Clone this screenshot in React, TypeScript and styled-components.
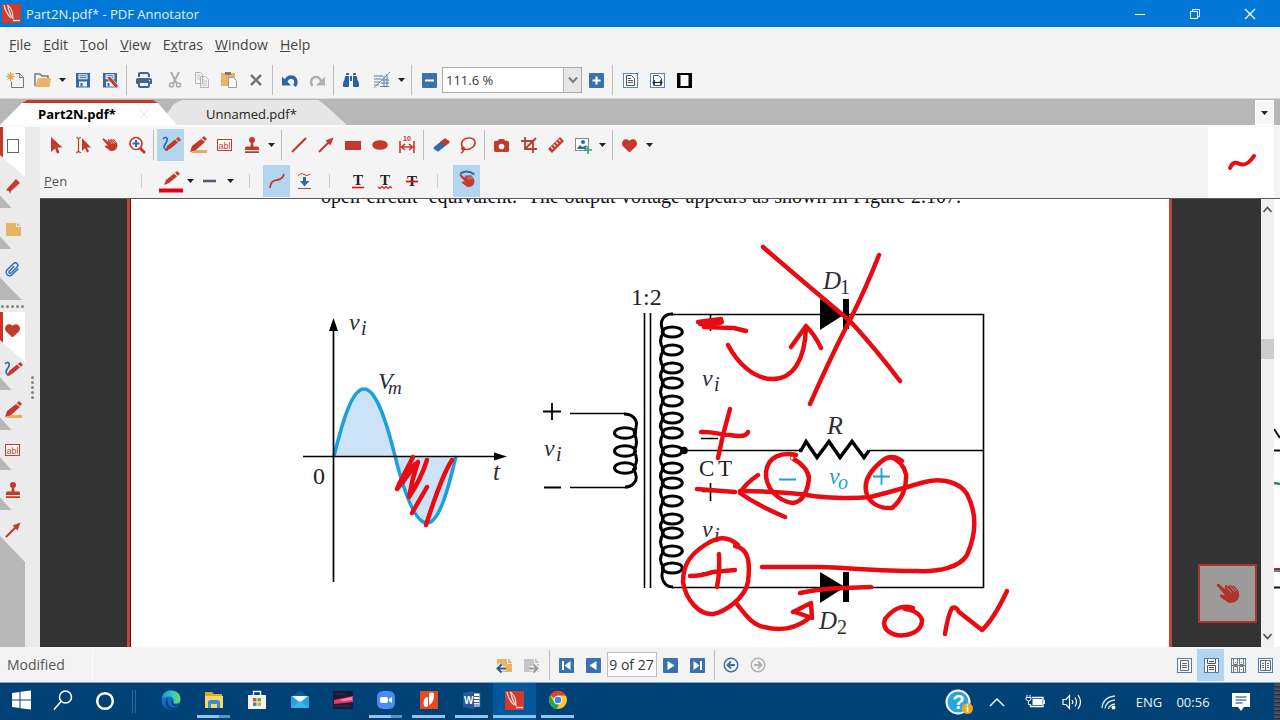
import React from 'react';
import styled, { createGlobalStyle, css } from 'styled-components';
import {
  FaBinoculars,
  FaCamera,
  FaHeart,
  FaPrint,
} from 'react-icons/fa6';

const RED = '#c5392b';
const BLUE = '#2f6aae';
const INK = '#e80c12';

const GlobalStyle = createGlobalStyle`
  * { box-sizing: border-box; }
  body { margin: 0; background: #fff; font-family: "Open Sans", "Noto Sans", sans-serif; }
  button { font: inherit; color: inherit; border: 0; background: none; padding: 0; margin: 0; }
`;

/* ---------- shell ---------- */

const Shell = styled.div`
  height: 100vh;
  display: flex;
  flex-direction: column;
  overflow: hidden;
  background: #f4f4f4;
  color: #3a3a3a;
  font-size: 14px;
`;

const TitleBar = styled.header`
  display: flex;
  align-items: center;
  height: 27px;
  flex: none;
  padding: 0 3px 0 2px;
  background: #0178d8;
  color: #e4f1fb;
`;

const TitleText = styled.h1`
  flex: 1;
  margin: 0 0 0 5px;
  font-size: 13px;
  font-weight: 400;
`;

const WindowButton = styled.button`
  width: 55px;
  height: 27px;
  display: grid;
  place-items: center;
`;

const MenuBar = styled.nav`
  display: flex;
  align-items: center;
  flex: none;
  height: 35px;
  padding-left: 9px;
  gap: 12px;
`;

const MenuItem = styled.button`
  line-height: 20px;
  color: #444;
`;

const ToolRow = styled.div<{ $h: number; $pad: number }>`
  display: flex;
  align-items: center;
  height: ${(p) => p.$h}px;
  padding-left: ${(p) => p.$pad}px;
`;

const IconButton = styled.button<{ $active?: boolean; $before?: number }>`
  flex: none;
  width: 27px;
  height: 32px;
  margin-left: ${(p) => p.$before ?? 0}px;
  display: grid;
  place-items: center;
  background: ${(p) => (p.$active ? '#b3d5f0' : 'transparent')};
`;

const CaretButton = styled.button`
  flex: none;
  width: 13px;
  height: 32px;
  display: grid;
  place-items: center;
`;

const Divider = styled.span<{ $short?: boolean; $before?: number; $after?: number }>`
  flex: none;
  width: 1px;
  height: ${(p) => (p.$short ? 14 : 30)}px;
  margin: 0 ${(p) => p.$after ?? 3}px 0 ${(p) => p.$before ?? 3}px;
  background: ${(p) => (p.$short ? '#cfcfcf' : '#bdbdbd')};
`;

const ZoomBox = styled.label`
  display: flex;
  width: 140px;
  height: 26px;
  border: 1px solid #ababab;
  background: #fff;
`;

const ZoomSelect = styled.select`
  flex: 1;
  min-width: 0;
  appearance: none;
  border: 0;
  padding: 0 0 0 3px;
  background: transparent;
  font: inherit;
  font-size: 13px;
  color: #3a3a3a;
`;

const ZoomArrow = styled.span`
  width: 18px;
  display: grid;
  place-items: center;
  border-left: 1px solid #b5b5b5;
  background: #e6e6e6;
  pointer-events: none;
`;

/* ---------- tabs ---------- */

const TabStrip = styled.div`
  display: flex;
  flex: none;
  height: 29px;
  padding-top: 1px;
  border-top: 1px solid #d8d8d8;
  border-bottom: 2px solid #fafafa;
  background: #b7b7b7;
`;

const Tab = styled.button<{ $active?: boolean }>`
  display: flex;
  align-items: center;
  width: ${(p) => (p.$active ? 177 : 182)}px;
  padding-left: ${(p) => (p.$active ? 38 : 41)}px;
  gap: 23px;
  font-size: 13px;
  color: #222;
  ${(p) =>
    p.$active
      ? css`
          background: #fff;
          border-top: 3px solid ${RED};
          font-weight: 700;
          color: #000;
          z-index: 1;
          clip-path: polygon(0 100%, 22px 3px, 27px 0, calc(100% - 24px) 0, calc(100% - 19px) 3px, 100% 100%);
        `
      : css`
          margin-left: -12px;
          padding-top: 3px;
          background: #e6e6e6;
          clip-path: polygon(0 100%, 0 16px, 9px 4px, 17px 0, calc(100% - 29px) 0, calc(100% - 23px) 4px, 100% 100%);
        `}
`;

const TabListButton = styled.button`
  width: 19px;
  height: 25px;
  margin: 0 6px 0 auto;
  display: grid;
  place-items: center;
  background: #f6f6f6;
  border: 1px solid #fff;
`;

/* ---------- body ---------- */

const Body = styled.div`
  flex: 1;
  min-height: 0;
  display: flex;
`;

const SideBar = styled.aside`
  display: flex;
  flex: none;
  width: 40px;
  background: #ebebeb;
`;

const SideTabs = styled.div`
  width: 25px;
  display: flex;
  flex-direction: column;
  background: #ebebeb;
`;

const SideTab = styled.button<{ $active?: boolean; $h: number }>`
  flex: none;
  width: 25px;
  height: ${(p) => p.$h}px;
  display: grid;
  place-items: center;
  background: linear-gradient(48deg, #b7b7b7 8px, #ebebeb 9px);
  ${(p) =>
    p.$active &&
    css`
      z-index: 1;
      margin-bottom: -12px;
      padding-bottom: 13px;
      background: linear-gradient(to right, #c5392b 3px, #fff 3px);
      clip-path: polygon(0 0, 100% 0, 100% 100%, 0 calc(100% - 22px));
    `}
`;

const SideGrip = styled.div`
  flex: none;
  display: flex;
  align-items: center;
  justify-content: center;
  gap: 2px;
  height: 12px;
`;

const SideEnd = styled.div<{ $fill?: boolean }>`
  flex: ${(p) => (p.$fill ? 1 : 'none')};
  height: ${(p) => (p.$fill ? 'auto' : '22px')};
  background: #b7b7b7;
  margin-top: ${(p) => (p.$fill ? -14 : -12)}px;
  clip-path: ${(p) =>
    p.$fill ? 'polygon(0 0, 100% 26px, 100% 100%, 0 100%)' : 'polygon(0 0, 22px 100%, 0 100%)'};
`;

const Splitter = styled.div`
  flex: 1;
  display: flex;
  flex-direction: column;
  align-items: center;
  justify-content: center;
  gap: 2px;
`;

const Dot = styled.i`
  width: 3px;
  height: 3px;
  border-radius: 50%;
  background: #858585;
`;

const Main = styled.main`
  flex: 1;
  min-width: 0;
  display: flex;
  flex-direction: column;
`;

const ToolPanel = styled.div`
  display: flex;
  flex: none;
  border-bottom: 1px solid #5a5a5a;
`;

const ToolRows = styled.div`
  flex: 1;
`;

const ToolName = styled.span`
  width: 97px;
  font-size: 13px;
  color: #555;
`;

const PenPreview = styled.div`
  width: 66px;
  margin-right: 6px;
  display: grid;
  place-items: center;
  background: #fff;
`;

const Viewport = styled.div`
  flex: 1;
  min-height: 0;
  display: flex;
`;

const Desk = styled.section`
  position: relative;
  flex: 1;
  min-width: 0;
  display: flex;
  overflow: hidden;
  padding: 0 89px 0 87px;
  background: #333;
`;

const Page = styled.article`
  flex: 1;
  min-width: 0;
  overflow: hidden;
  background: #fff;
  border: solid #bd4739;
  border-width: 0 3px;
  box-shadow: inset 1px 0 #600d0d;
`;

const BodyText = styled.p`
  width: 640px;
  margin: -15px 0 0 191px;
  line-height: 24px;
  white-space: nowrap;
  text-align-last: justify;
  font-family: "Liberation Serif", serif;
  font-size: 20px;
  color: #111;
`;

const Figure = styled.svg`
  display: block;
  width: 100%;
  height: auto;
  font-family: "Liberation Serif", serif;
`;

const TouchButton = styled.button`
  position: absolute;
  right: 4px;
  bottom: 24px;
  width: 59px;
  height: 59px;
  display: grid;
  place-items: center;
  background: #9d9b9a;
  border: 2px solid #a8352b;
`;

const ScrollBar = styled.div`
  width: 13px;
  display: flex;
  flex-direction: column;
  align-items: center;
  padding: 6px 0 6px;
  background: #f0f0f0;
`;

const ScrollThumb = styled.div`
  width: 13px;
  height: 20px;
  margin: 125px 0 auto;
  background: #cdcdcd;
`;

const Fringe = styled.svg`
  flex: none;
  width: 6px;
  height: 448px;
  background: #fff;
`;

/* ---------- status bar ---------- */

const StatusBar = styled.footer`
  display: flex;
  flex: none;
  align-items: center;
  height: 35px;
  background: #f3f3f3;
`;

const StatusSide = styled.div<{ $end?: boolean }>`
  flex: 1 1 0;
  display: flex;
  align-items: center;
  justify-content: ${(p) => (p.$end ? 'flex-end' : 'flex-start')};
  padding-right: ${(p) => (p.$end ? 2 : 0)}px;
  color: #555;
`;

const StatusText = styled.span`
  width: 93px;
  padding-left: 7px;
  line-height: 30px;
  border-right: 1px solid #fff;
`;

const PageNav = styled.div`
  display: flex;
  align-items: center;
  margin-right: 16px;
`;

const PageInput = styled.input`
  width: 50px;
  height: 25px;
  padding: 0;
  border: 1px solid #bdbdbd;
  background: #fff;
  text-align: center;
  font: inherit;
  color: #333;
`;

/* ---------- taskbar ---------- */

const TaskBar = styled.div`
  display: flex;
  flex: none;
  height: 38px;
  border-top: 1px solid #7aa9c6;
  background: #004275;
  color: #e8f1f8;
`;

const TaskButton = styled.button<{ $w: number; $running?: boolean; $active?: boolean; $multi?: boolean }>`
  width: ${(p) => p.$w}px;
  display: flex;
  flex-direction: column;
  align-items: center;
  justify-content: space-between;
  padding: 5px 0 2px;
  background: ${(p) => (p.$active ? '#01579b' : 'transparent')};
  &::after {
    content: '';
    width: ${(p) => (p.$active ? '100%' : '33px')};
    height: 3px;
    background: ${(p) =>
      p.$multi
        ? 'linear-gradient(to right, #8fc4ef 22px, #5f93bf 22px)'
        : p.$running
          ? '#8fc4ef'
          : 'transparent'};
  }
`;

const TaskDivider = styled.span`
  width: 4px;
  height: 23px;
  margin: 7px 13px 0 6px;
  border: solid #2f6797;
  border-width: 0 1px;
`;

const Tray = styled.div`
  display: flex;
  align-items: center;
  margin-left: auto;
  font-size: 13px;
`;

const TrayItem = styled.button<{ $w: number }>`
  width: ${(p) => p.$w}px;
  height: 36px;
  display: grid;
  place-items: center;
`;

const TrayEdge = styled.span`
  width: 6px;
  height: 37px;
  margin-left: 8px;
  background: repeating-linear-gradient(#5b3355 0 1px, #1d5a50 1px 2px, #5a5a48 2px 3px, #33224f 3px 4px);
`;

/* ---------- icons ---------- */

const Svg = ({ children, w = 24, h = 24 }: { children: React.ReactNode; w?: number; h?: number }) => (
  <svg width={w} height={h} viewBox={`0 0 ${w} ${h}`} fill="none" aria-hidden="true">
    {children}
  </svg>
);

const Caret = () => (
  <Svg w={9} h={6}>
    <path d="M1 1h7L4.5 5z" fill="#222" />
  </Svg>
);

const Hand = ({ size = 16, color = RED, gap = '#f4f4f4', swipe }: { size?: number; color?: string; gap?: string; swipe?: boolean }) => (
  <svg width={size} height={size} viewBox="0 0 24 24" fill="none" overflow="visible" aria-hidden="true">
    {swipe && <path d="M2 1Q12-6 23 2" stroke={BLUE} strokeWidth="3" />}
    <path
      d="M.8 3.6Q.4 1.600 2.600 1.800L9.500 7.500 8.600 4.800Q9.200 2.800 11 3.600L12.400 4.600Q13 2.200 15 3.200L16.200 4.300Q17 2.800 18.600 3.900L22.500 9Q24.500 14 21.500 18 17.500 22.500 12 20.500L5 15.500Q2.800 13.500 5.200 12.600L9 13.200z"
      fill={color}
    />
    <path d="M11 5.500l4.500 5M14.200 4.600l4.300 5M17.500 5l3 4" stroke={gap} strokeWidth=".9" />
  </svg>
);

const Pencil = ({ wave, mark, bar }: { wave?: boolean; mark?: boolean; bar?: boolean }) => (
  <Svg>
    {mark && <path d="M8 17h13v3H5z" fill="#e8ad5c" />}
    {wave && <path d="M4 6c3-3 5-1 4 2s-5 5-2 8c1 1 2 1 3 1" stroke={BLUE} strokeWidth="1.700" />}
    <g transform={bar ? 'translate(-1 -2)' : undefined}>
      <path d={mark ? 'M4 19l2-6 9-7 4 3-9 8z' : 'M6 18l2-5 8-6.500 3 3-8 6.500z'} fill={RED} />
      <path d={mark ? 'M16 5l2-2 3 3-2 2z' : 'M17 5.800l2.300-1.800 2.700 3-2.300 1.800z'} fill={RED} />
    </g>
    {bar && <path d="M0 19.500h24v4H0z" fill="#e60012" />}
  </Svg>
);

const Abl = () => (
  <Svg w={18} h={16}>
    <rect x="1.500" y="2.500" width="14" height="11" stroke={RED} fill="#fff" />
    <text x="2.500" y="11.500" fontSize="9" fontFamily="Liberation Sans, sans-serif" fill={RED}>abl</text>
  </Svg>
);

const Stamp = () => (
  <Svg w={18} h={18}>
    <circle cx="9" cy="4" r="3" fill={RED} />
    <path d="M8 6h2l.500 4.500h4q1.500 0 1.500 1.500v2H2v-2q0-1.500 1.500-1.500h4zM2 15.200h14v1.800H2z" fill={RED} />
  </Svg>
);

const ArrowLine = () => (
  <Svg w={18} h={18}>
    <path d="M2 16L12 6" stroke={RED} strokeWidth="2.200" />
    <path d="M16.500 1.500l-3 8-5-5z" fill={RED} />
  </Svg>
);

const NewDoc = () => (
  <Svg>
    <path d="M11.500 5.500h4l4 4v10h-12v-6M15.500 5.500v4h4" stroke="#777" />
    <path d="M6.500 4v9M2 8.500h9M3.500 5.500l6 6M9.500 5.500l-6 6" stroke="#e3a54d" strokeWidth="1.200" />
  </Svg>
);

const Folder = () => (
  <Svg>
    <path d="M4 18V6h5l2 2h6v3" stroke="#777" strokeWidth="1.500" />
    <path d="M7 10h13l-1.500 9H4.500z" fill="#e8b566" />
  </Svg>
);

const Floppy = ({ pen }: { pen?: boolean }) => (
  <Svg>
    <path d="M5 5h14v14.500H5z" fill={BLUE} />
    <path d="M7.500 6.200h9v5h-9zM8 13.500h8v5H8z" fill="#f4f4f4" />
    <path d="M8.500 7.800h7M8.500 9.700h7" stroke={BLUE} />
    <path d="M9.500 15h2v3.500h-2z" fill={BLUE} />
    {pen && <path d="M9 8l4 1 7.500 9-2.500 2.500-8-9z" fill={RED} stroke="#f4f4f4" strokeWidth=".8" />}
  </Svg>
);

const Cut = () => (
  <Svg>
    <path d="M8 4l6 12M16 4l-6 12" stroke="#a9a9a9" strokeWidth="1.800" />
    <circle cx="8.500" cy="17" r="2" stroke="#a9a9a9" strokeWidth="1.500" />
    <circle cx="15.500" cy="17" r="2" stroke="#a9a9a9" strokeWidth="1.500" />
  </Svg>
);

const Copy = () => (
  <Svg>
    <path d="M5.500 4.500h5l2 2v9h-7zM10.500 8.500h5l3 3v8h-8z" fill="#f4f4f4" stroke="#b5b5b5" />
    <path d="M7 7h3M7 9h3M7 11h3M12 13h5M12 15h5M12 17h5" stroke="#c2c2c2" />
  </Svg>
);

const Paste = () => (
  <Svg>
    <path d="M4 5h14v13H4z" fill="#e8b566" />
    <path d="M8 4h6v3H8z" fill="#777" />
    <path d="M11.500 9.500h5l3 3v7h-8z" fill="#fff" stroke="#999" />
  </Svg>
);

const Redo = ({ color, flip, weight = 3.4 }: { color: string; flip?: boolean; weight?: number }) => (
  <Svg>
    <g transform={flip ? 'translate(24 0) scale(-1 1)' : undefined}>
      <path d="M7.500 18c-3-4-1-9 3.500-9 3 0 4.500 2 5.500 5" stroke={color} strokeWidth={weight} />
      <path d="M20 8.500v9h-9z" fill={color} />
    </g>
  </Svg>
);

const SquareIcon = ({ children }: { children: React.ReactNode }) => (
  <Svg>
    <rect x="5" y="5" width="15" height="15" rx="1" fill="#3a70ad" />
    {children}
  </Svg>
);

const HatchIcon = () => (
  <Svg>
    <path d="M4 8h9M4 11h8M4 14h6M4 17h5M10 18.500h9M14 8v11M17 6v13M11 15h8M12 12h7" stroke="#5d7fa6" />
    <path d="M4 20L20 4" stroke="#7793b3" />
  </Svg>
);

const PageFit = ({ wide }: { wide?: boolean }) => (
  <Svg>
    <rect x="5.500" y="5.500" width="14" height="14" stroke="#5c88b5" fill="#fafcff" />
    <path d="M8.500 7.500h5l3 3v7h-8z" stroke="#555" />
    {wide ? (
      <>
        <path d="M7 13h11v3H7z" fill="#fafcff" />
        <path d="M8 14.500h9M10 12.500l-2 2 2 2M15 12.500l2 2-2 2" stroke="#222" strokeWidth="1.200" />
      </>
    ) : (
      <path d="M10 10.500h3M10 12.500h5M10 14.500h5" stroke="#555" />
    )}
  </Svg>
);

const ViewIcon = ({ kind }: { kind: number }) => (
  <Svg>
    <rect x="5.500" y="5.500" width="14" height="14" stroke="#4e80ae" fill="#f6fafd" />
    {kind === 0 && <path d="M8.500 7.500h8v10h-8zM10 10.500h5M10 12.500h5M10 14.500h5" stroke="#666" />}
    {kind === 1 && <path d="M8.500 6v4.500h8V6M8.500 19v-6.500h8V19M10 8.500h5M10 14.500h5M10 16.500h5" stroke="#555" />}
    {kind === 2 && <path d="M7.500 6v5.500h4V6M13.500 6v5.500h4V6M7.500 19v-5.500h4V19M13.500 19v-5.500h4V19M6 12.500h13M9 9.500h1M15 9.500h1M9 16.500h1M15 16.500h1" stroke="#777" />}
    {kind === 3 && <path d="M7.500 7.500h10v10h-10zM12.500 7v11M9 10.500h2M9 12.500h2M9 14.500h2M14 10.500h2M14 12.500h2M14 14.500h2" stroke="#666" />}
  </Svg>
);

const TextMark = ({ kind }: { kind: 'under' | 'wave' | 'strike' }) => (
  <Svg>
    <text x="7" y={kind === 'strike' ? 17 : 16} fontSize="15" fontWeight="700" fontFamily="Liberation Serif, serif" fill="#222">T</text>
    {kind === 'under' && <path d="M6 18.500h12" stroke={INK} strokeWidth="1.600" />}
    {kind === 'wave' && <path d="M5 18l2 1.500 2-2 2 2 2-2 2 2 2-2 2 1.500" stroke={INK} strokeWidth="1.200" />}
    {kind === 'strike' && <path d="M6 12.500h12" stroke={INK} strokeWidth="1.800" />}
  </Svg>
);

const NoteArrow = ({ color, arrow, right }: { color: string; arrow: string; right?: boolean }) => (
  <Svg>
    <path d="M5 6h10v5h5v8H5z" fill={color} />
    <path d="M16 5l4.500 5H16z" fill={color} />
    <path d={right ? 'M10 15.500h9M14.500 11.500l4 4-4 4' : 'M14 15.500H5M9 11.500l-4 4 4 4'} stroke="#f3f3f3" strokeWidth="4.500" />
    <path d={right ? 'M10 15.500h8M14.500 11.500l4 4-4 4' : 'M14 15.500H6M9.500 11.500l-4 4 4 4'} stroke={arrow} strokeWidth="2" />
  </Svg>
);

const CircleArrow = ({ color, right }: { color: string; right?: boolean }) => (
  <Svg>
    <circle cx="12" cy="12" r="6.800" stroke={color} strokeWidth="1.500" />
    <path d={right ? 'M8 12h7M12 8.500l3.500 3.500-3.500 3.500' : 'M16 12H9M12 8.500L8.500 12l3.500 3.500'} stroke={color} strokeWidth="1.900" />
  </Svg>
);

const AppLogo = ({ tall }: { tall?: boolean }) => (
  <Svg w={19} h={tall ? 24 : 19}>
    <g transform={tall ? 'translate(0 3)' : undefined}>
      <rect width="19" height="19" fill="#d23a2e" />
      <path d="M2 1c1 5 3 9 7 13M6 1c0 5 2 9 5 14M5 1c5 3 6 8 6 14" stroke="#f7dcd8" strokeWidth="1.300" />
      <path d="M11 16.500h7" stroke="#fff" strokeWidth="1.300" />
    </g>
  </Svg>
);

const WindowsLogo = () => (
  <Svg w={20} h={24}>
    <path d="M1 5l7.500-1v7.500H1zM9.500 3.800L20 2.500v9H9.500zM1 12.500h7.500V20L1 19zM9.500 12.500H20v9L9.500 20.200z" fill="#fff" />
  </Svg>
);

const EdgeLogo = () => (
  <Svg w={20} h={24}>
    <defs>
      <linearGradient id="edgeTop" x1="0" y1="0" x2="1" y2="0">
        <stop offset="0" stopColor="#1a8fd8" />
        <stop offset=".550" stopColor="#35c3c6" />
        <stop offset="1" stopColor="#6fdc5a" />
      </linearGradient>
    </defs>
    <circle cx="10" cy="12" r="9.500" fill="#1470c0" />
    <path d="M.7 10.500C1.500 5 5.500 2.500 10 2.500c6 0 9.500 4 9.500 8.500 0 3-2 4.500-4.500 4.500-2 0-3-.8-2.500-2 .6-3-1-5-4.500-5-3 0-5.500 1-7.300 2z" fill="url(#edgeTop)" />
    <path d="M8 9.500c-3 3-1.500 8 3 9.500 2.500.8 5 .5 7-1-2 3-5 3.800-8 3.500-4-.5-6-4-5.500-7 .3-2 1.500-4 3.500-5z" fill="#0c3f86" />
    <path d="M12.500 13.500c-1 1-.5 3 2.500 3 1.500 0 3-.5 4-1.500-1 3-4.500 4-7 2.500-2-1-2-4-.5-6z" fill="#004275" />
  </Svg>
);

const ExplorerLogo = () => (
  <Svg w={20} h={24}>
    <path d="M1 4h7l2 2h8v14H1z" fill="#d9a62e" />
    <path d="M1 8h18v12H1z" fill="#fbd768" />
    <path d="M4 20v-6c0-1 1-2 2-2h8c1 0 2 1 2 2v6h-3v-4H7v4z" fill="#3b8fd0" />
  </Svg>
);

const StoreLogo = () => (
  <Svg w={20} h={24}>
    <path d="M6.500 8V3.500h7V8" stroke="#f4f4f4" strokeWidth="1.500" />
    <path d="M1 7h18v14H1z" fill="#f4f4f4" />
    <path d="M6 10h3.500v3.500H6z" fill="#e0542b" />
    <path d="M10.500 10H14v3.500h-3.500z" fill="#77a92c" />
    <path d="M6 14.500h3.500V18H6z" fill="#2b8fd0" />
    <path d="M10.500 14.500H14V18h-3.500z" fill="#e5ab21" />
  </Svg>
);

const MailLogo = () => (
  <Svg w={20} h={24}>
    <path d="M1 9l9-6 9 6z" fill="#0d5c9e" />
    <path d="M1 8h18v12H1z" fill="#2aa0e0" />
    <path d="M2 8h16l-8 6.500z" fill="#eef7fd" />
    <path d="M1 20l9-7 9 7z" fill="#3fb4ec" />
  </Svg>
);

const MediaLogo = () => (
  <Svg w={20} h={24}>
    <rect y="3" width="20" height="18" fill="#191a35" />
    <path d="M1 12l9-2 10-2v6l-9 1-10 1z" fill="#e23a6d" />
    <path d="M6 12l13-3v3l-9 1z" fill="#f58aa5" />
    <path d="M1 18h17M3 6h9" stroke="#4b2c55" />
  </Svg>
);

const ZoomLogo = () => (
  <Svg w={20} h={24}>
    <rect x="1" y="3" width="18" height="18" rx="6" fill="#4a8cf6" />
    <rect x="4" y="9" width="8" height="6" rx="2" fill="#fff" />
    <path d="M13 11l3-2v6l-3-2z" fill="#fff" />
  </Svg>
);

const NitroLogo = () => (
  <Svg w={20} h={24}>
    <rect x="1" y="3" width="18" height="18" fill="#e8491f" />
    <path d="M5 18c-1-5 0-8 3-9l1 1v8c-1 1-3 1-4 0z" fill="#fff" />
    <path d="M10 17V6c1-2 4-2 5 0 0 5-1 9-5 11z" fill="#fff" />
  </Svg>
);

const WordLogo = () => (
  <Svg w={20} h={24}>
    <path d="M10 5h8v14h-8z" fill="#fff" stroke="#2b579a" />
    <path d="M12 8.500h5M12 11.500h5M12 14.500h5M12 17h5" stroke="#2b579a" />
    <path d="M1 5l11-2v18L1 19z" fill="#2b579a" />
    <text x="2" y="16" fontSize="10" fontWeight="700" fontFamily="Liberation Sans, sans-serif" fill="#fff">W</text>
  </Svg>
);

const ChromeLogo = () => (
  <Svg w={20} h={24}>
    <circle cx="10" cy="12" r="9" fill="#fbc92e" />
    <path d="M2.200 7.500A9 9 0 0 1 17.800 7.500H10a4.500 4.500 0 0 0-4 2.500z" fill="#e2402f" />
    <path d="M2.200 7.500L6.100 14.300A4.500 4.500 0 0 0 11 16.400L8.800 21A9 9 0 0 1 2.200 7.500z" fill="#2ba24c" />
    <circle cx="10" cy="12" r="4.300" fill="#fff" />
    <circle cx="10" cy="12" r="3.300" fill="#3f83ee" />
  </Svg>
);

/* ---------- circuit figure ---------- */

const SECONDARY = [332, 350, 368, 383, 401, 418, 433, 451, 468, 483, 501, 519, 533, 551, 568];
const PRIMARY = [433, 451, 468];

const Symbol = ({ x, y, main, sub, dx = 11, size = 24, subSize = 20, color = '#2d2d3a', upright }: {
  x: number; y: number; main: string; sub?: string; dx?: number; size?: number; subSize?: number; color?: string; upright?: boolean;
}) => (
  <g fill={color} fontStyle="italic">
    <text x={x} y={y} fontSize={size}>{main}</text>
    {sub && (
      <text x={x + dx} y={y + 5} fontSize={subSize} fontStyle={upright ? 'normal' : 'italic'}>{sub}</text>
    )}
  </g>
);

const Diode = ({ y }: { y: number }) => (
  <path d={`M820 ${y - 15}l25 15-25 16zM843 ${y - 15}h6v30h-6z`} fill="#000" />
);

const CircuitFigure = () => (
  <Figure viewBox="130 208 1039 439" fill="none" role="img" aria-label="Full-wave rectifier circuit">
    <path d="M334 456C343 420 352 389 364 389S386 420 395 456 415 523 427 523 448 490 456 456z" fill="#cce3f7" />
    <path d="M334 456C343 420 352 389 364 389S386 420 395 456 415 523 427 523 448 490 456 456" stroke="#1c9fda" strokeWidth="3.500" />
    <path d="M303 456.500H496M333.500 582V328" stroke="#000" strokeWidth="1.700" />
    <path d="M507 456.500l-13-4v8zM333.500 318l-4.500 13h9z" fill="#000" />
    <Symbol x={349} y={330} main="v" sub="i" dx={12} />
    <Symbol x={378} y={389} main="V" sub="m" dx={10} subSize={19} />
    <Symbol x={493} y={480} main="t" size={25} />
    <text x="313" y="484" fontSize="24" fill="#222">0</text>

    <path d="M543 411.500h18M552 403v17M544 487.500h17" stroke="#000" strokeWidth="1.800" />
    <Symbol x={544} y={456} main="v" sub="i" dx={12} />
    <path d="M570 413.500h55M570 487.500h58M644.500 313v275M650.500 313v275" stroke="#000" strokeWidth="1.600" />
    <g stroke="#000" strokeWidth="3">
      <path d="M624 414c9 0 14 6 12 13Q636 432 633 433M633 468Q639 478 634 483q-3 4-9 4" />
      {PRIMARY.map((cy) => <ellipse key={cy} cx="625" cy={cy} rx="10.500" ry="5.300" />)}
      <path d="M634 433q5 9 0 18M634 451q5 9 0 17" />
      <path d="M673 314c-10-1-15 9-9 18M664 568c-5 9 0 19 9 19" />
      {SECONDARY.map((cy, i) => (
        <React.Fragment key={cy}>
          <ellipse cx="672.300" cy={cy} rx="10" ry="5" />
          {i > 0 && <path d={`M664 ${SECONDARY[i - 1]}Q657 ${(SECONDARY[i - 1] + cy) / 2} 664 ${cy}`} />}
        </React.Fragment>
      ))}
    </g>
    <circle cx="684" cy="450.500" r="3.800" fill="#000" />
    <path d="M672 314.500H983.500V587.500H672M684 450.500H800M869 450.500H983" stroke="#000" strokeWidth="1.600" />
    <path d="M799 450.500h2l5-9 11 16 12-16 11 16 12-16 12 16 5-7" stroke="#000" strokeWidth="3.500" />
    <Diode y={314} />
    <Diode y={587} />
    <text x="631" y="305" fontSize="24" fill="#222">1:2</text>
    <Symbol x={823} y={289} main="D" sub="1" dx={17} size={25} upright />
    <Symbol x={819} y={629} main="D" sub="2" dx={18} size={25} upright />
    <Symbol x={827} y={434} main="R" size={26} />
    <Symbol x={702} y={386} main="v" sub="i" dx={12} />
    <Symbol x={702} y={537} main="v" sub="i" dx={12} />
    <Symbol x={829} y={484} main="v" sub="o" dx={9} color="#1c9fda" />
    <text x="699" y="476" fontSize="23" fill="#222">C</text>
    <text x="718" y="476" fontSize="23" fill="#222">T</text>
    <path d="M710.500 314v17M701 438.500h17M702 491.500h16M710.500 483v18M702 573h17" stroke="#000" strokeWidth="1.600" />
    <path d="M779 479.500h17M873 476.500h17M881.500 468v17" stroke="#1c9fda" strokeWidth="1.800" />

    <g stroke={INK} strokeWidth="4.500" strokeLinecap="round" strokeLinejoin="round">
      <path d="M763 247C785 266 800 279 850 321Q875 348 900 381M879 255C870 278 860 300 850 320Q833 352 810 404" />
      <path d="M728 345C737 362 753 379 773 379S805 360 806 327M791 347L806 326Q815 335 821 348" />
      <path d="M698 322L721 319 704 327 734 328 746 331M700 324L720 323M708 325L722 322" />
      <path d="M701 432C713 431 719 435 730 435Q746 438 748 432M730 409Q727 420 723 435L718 458" />
      <path d="M697 489L735 492M740 491C765 491 780 492 800 494 822 498 850 499 870 497 895 491 910 486 925 482 943 477 960 483 967 494 978 515 975 537 967 555 960 567 940 572 917 571 880 571 850 568 820 567L762 567" />
      <path d="M758 475Q745 484 740 493 757 505 785 517" />
      <path d="M796 455C782 452 768 456 766 472 765 487 777 501 793 503 803 502 808 490 809 478 808 470 801 463 792 458" />
      <path d="M902 461C895 456 888 456 882 461 872 469 864 480 866 491 868 502 878 509 892 508 902 500 907 487 906 474 903 463 897 459 891 457" />
      <path d="M738 545C727 535 717 537 705 545 691 554 683 564 683 582 686 600 699 615 713 614 725 612 745 598 748 582 750 565 750 549 735 546" />
      <path d="M690 576Q701 576 713 572L735 570M719 554Q720 573 717 587" />
      <path d="M736 603C745 614 752 625 764 627 780 631 795 629 808 619M793 612L811 603 812 618 795 612" />
      <path d="M800 593Q825 588 845 588L871 587" />
      <path d="M913 608C899 603 890 613 885 619 881 630 893 637 906 635 916 633 922 628 922 620 920 613 911 609 905 609" />
      <path d="M945 634Q948 615 952 608 956 606 959 612L982 630C992 621 999 608 1007 591" />
      <path d="M413 457Q405 472 397 489L418 462Q412 479 409 497 421 479 427 460M399 484L410 466M403 482L415 464M427 487L412 513M452 460Q442 475 426 525" />
    </g>
    <circle cx="792" cy="458" r="1.500" fill="#fff" />
  </Figure>
);

const menus: [string, string, string][] = [
  ['', 'F', 'ile'],
  ['', 'E', 'dit'],
  ['', 'T', 'ool'],
  ['', 'V', 'iew'],
  ['E', 'x', 'tras'],
  ['', 'W', 'indow'],
  ['', 'H', 'elp'],
];

export default function App() {
  return (
    <Shell>
      <GlobalStyle />
      <TitleBar>
        <AppLogo />
        <TitleText>Part2N.pdf* - PDF Annotator</TitleText>
        <WindowButton aria-label="Minimize"><Svg w={12} h={12}><path d="M1 6.500h10" stroke="#fff" /></Svg></WindowButton>
        <WindowButton aria-label="Restore">
          <Svg w={12} h={12}><path d="M1.500 3.500h7v7h-7zM3.500 3V1.500h7v7H9" stroke="#fff" /></Svg>
        </WindowButton>
        <WindowButton aria-label="Close"><Svg w={12} h={12}><path d="M1 1l10 10M11 1L1 11" stroke="#fff" strokeWidth="1.200" /></Svg></WindowButton>
      </TitleBar>

      <MenuBar aria-label="Main menu">
        {menus.map(([a, u, b]) => (
          <MenuItem key={a + u + b}>{a}<u>{u}</u>{b}</MenuItem>
        ))}
      </MenuBar>

      <ToolRow $h={36} $pad={2} role="toolbar" aria-label="Document">
        <IconButton aria-label="New"><NewDoc /></IconButton>
        <IconButton aria-label="Open"><Folder /></IconButton>
        <CaretButton aria-label="Recent files"><Caret /></CaretButton>
        <IconButton aria-label="Save"><Floppy /></IconButton>
        <IconButton aria-label="Save as"><Floppy pen /></IconButton>
        <Divider />
        <IconButton aria-label="Print"><FaPrint size={16} color="#44658a" /></IconButton>
        <IconButton $before={4} aria-label="Cut"><Cut /></IconButton>
        <IconButton aria-label="Copy"><Copy /></IconButton>
        <IconButton aria-label="Paste"><Paste /></IconButton>
        <IconButton aria-label="Delete"><Svg><path d="M7 7l10 10M17 7L7 17" stroke="#777" strokeWidth="2.500" /></Svg></IconButton>
        <Divider />
        <IconButton aria-label="Undo"><Redo color="#2b66a8" flip /></IconButton>
        <IconButton aria-label="Redo"><Redo color="#b0b0b0" weight={2.4} /></IconButton>
        <Divider />
        <IconButton aria-label="Find"><FaBinoculars size={16} color="#2463a5" /></IconButton>
        <IconButton $before={4} aria-label="Page background"><HatchIcon /></IconButton>
        <CaretButton aria-label="Background options"><Caret /></CaretButton>
        <Divider />
        <IconButton aria-label="Zoom out"><SquareIcon><path d="M8 12.500h9" stroke="#fff" strokeWidth="2" /></SquareIcon></IconButton>
        <ZoomBox>
          <ZoomSelect aria-label="Zoom"><option>111.6 %</option></ZoomSelect>
          <ZoomArrow><Svg w={10} h={8}><path d="M1 1.500l4 4.500 4-4.500" stroke="#7a7a7a" strokeWidth="2" /></Svg></ZoomArrow>
        </ZoomBox>
        <IconButton aria-label="Zoom in"><SquareIcon><path d="M8.500 12.500h8M12.500 8.500v8" stroke="#fff" strokeWidth="2" /></SquareIcon></IconButton>
        <Divider />
        <IconButton aria-label="Fit page"><PageFit /></IconButton>
        <IconButton aria-label="Fit width"><PageFit wide /></IconButton>
        <IconButton aria-label="Full screen">
          <Svg><path d="M5 5h15v15H5z" fill="#000" /><path d="M8.500 7h8v11h-8z" fill="#fff" /></Svg>
        </IconButton>
      </ToolRow>

      <TabStrip role="tablist">
        <Tab $active role="tab" aria-selected="true">
          Part2N.pdf*
          <Svg w={10} h={10}><path d="M1 1l8 8M9 1L1 9" stroke="#e2e2e2" /></Svg>
        </Tab>
        <Tab role="tab" aria-selected="false">Unnamed.pdf*</Tab>
        <TabListButton aria-label="All documents"><Caret /></TabListButton>
      </TabStrip>

      <Body>
        <SideBar>
          <SideTabs>
            <SideTab $active $h={50} aria-label="Pages"><Svg w={16} h={16}><rect x="2.500" y="1.500" width="11" height="13" stroke="#666" /></Svg></SideTab>
            <SideTab $h={43} aria-label="Bookmarks"><Svg w={16} h={16}><path d="M11 0l4 4-9 8-1 3-1-3-3-1z" fill={RED} /></Svg></SideTab>
            <SideTab $h={41} aria-label="Notes"><Svg w={16} h={16}><path d="M1 2h10v4h5v9H1z" fill="#e8b566" /><path d="M12 1.500L15.500 5H12z" fill="#e8b566" /></Svg></SideTab>
            <SideTab $h={41} aria-label="Attachments">
              <Svg w={17} h={17}><g transform="rotate(45 8.500 8.500)"><path d="M12 4v8.500a3.500 3.500 0 0 1-7 0V3.500a2.500 2.500 0 0 1 5 0V12a1.300 1.300 0 0 1-2.600 0V5" stroke={BLUE} strokeWidth="1.400" /></g></Svg>
            </SideTab>
            <SideEnd />
            <SideGrip><Dot /><Dot /><Dot /><Dot /><Dot /></SideGrip>
            <SideTab $active $h={50} aria-label="Favorites"><FaHeart size={15} color={RED} /></SideTab>
            <SideTab $h={40} aria-label="Pens"><Pencil wave /></SideTab>
            <SideTab $h={40} aria-label="Markers"><Pencil mark /></SideTab>
            <SideTab $h={40} aria-label="Text boxes"><Abl /></SideTab>
            <SideTab $h={40} aria-label="Stamps"><Stamp /></SideTab>
            <SideTab $h={40} aria-label="Arrows"><ArrowLine /></SideTab>
            <SideEnd $fill />
          </SideTabs>
          <Splitter><Dot /><Dot /><Dot /><Dot /><Dot /></Splitter>
        </SideBar>

        <Main>
          <ToolPanel>
            <ToolRows>
              <ToolRow $h={36} $pad={2} role="toolbar" aria-label="Tools">
                <IconButton aria-label="Select"><Svg><path d="M7 4v15l4-3.500 2 5 2.500-1-2-5h5z" fill={RED} /></Svg></IconButton>
                <IconButton aria-label="Select text">
                  <Svg><path d="M5 4.500q2 0 2.500 1.500Q8 4.500 10 4.500M5 19.500q2 0 2.500-1.500.5 1.500 2.500 1.500M7.500 6v12" stroke={RED} strokeWidth="1.200" /><path d="M11 5v13l3-3 2 4.500 2-1-2-4h4z" fill={RED} /></Svg>
                </IconButton>
                <IconButton aria-label="Pan"><Hand /></IconButton>
                <IconButton aria-label="Magnify">
                  <Svg><circle cx="11" cy="10.500" r="6" stroke={RED} strokeWidth="1.700" /><path d="M15 15l5 5" stroke={RED} strokeWidth="2.800" /><path d="M7.500 10.500h7M11 7v7" stroke={BLUE} strokeWidth="2" /></Svg>
                </IconButton>
                <Divider />
                <IconButton $active aria-label="Pen"><Pencil wave /></IconButton>
                <IconButton aria-label="Marker"><Pencil mark /></IconButton>
                <IconButton aria-label="Text"><Abl /></IconButton>
                <IconButton aria-label="Stamp"><Stamp /></IconButton>
                <CaretButton aria-label="Stamp options"><Caret /></CaretButton>
                <Divider />
                <IconButton aria-label="Line"><Svg><path d="M5 19L19 5" stroke={RED} strokeWidth="2.200" /></Svg></IconButton>
                <IconButton aria-label="Arrow"><ArrowLine /></IconButton>
                <IconButton aria-label="Rectangle"><Svg><path d="M4 8h16v9H4z" fill={RED} /></Svg></IconButton>
                <IconButton aria-label="Ellipse"><Svg><ellipse cx="12" cy="12" rx="7.800" ry="4.800" fill={RED} /></Svg></IconButton>
                <IconButton aria-label="Measure">
                  <Svg><path d="M5 8v12M19 8v12M6 14h12M10 11l-3.500 3L10 17M14 11l3.500 3L14 17" stroke={RED} strokeWidth="1.600" /><text x="8" y="8" fontSize="7" fontWeight="700" fontFamily="Liberation Sans, sans-serif" fill={RED}>10</text></Svg>
                </IconButton>
                <Divider />
                <IconButton aria-label="Eraser">
                  <Svg><path d="M5 14l10-8q1-1 2 0l3 2q1 1 0 2L10 18q-1 1-2 0l-3-2q-1-1 0-2z" fill={BLUE} /><path d="M11 9l4-3q1-1 2 0l3 2q1 1 0 2l-4 3z" fill={RED} /></Svg>
                </IconButton>
                <IconButton aria-label="Lasso">
                  <Svg><path d="M7 15C3 9 8 4.500 14 5c6 .5 6 6 3 9-3 2.500-7 3-10 1.500M7 15c2 2 0 4-2 5" stroke={RED} strokeWidth="1.600" /><circle cx="7" cy="15.500" r="2" fill={RED} /></Svg>
                </IconButton>
                <Divider />
                <IconButton aria-label="Snapshot"><FaCamera size={15} color={RED} /></IconButton>
                <IconButton aria-label="Crop"><Svg><path d="M8 4v12h12M4 8h12v12M8 16L19 5" stroke={RED} strokeWidth="1.800" /></Svg></IconButton>
                <IconButton aria-label="Ruler">
                  <Svg><path d="M4 16L16 4l4 4L8 20z" fill={RED} /><path d="M7 14l2 2M9.500 11.500l2 2M12 9l2 2M14.500 6.500l2 2" stroke="#f4f4f4" strokeWidth="1.100" /></Svg>
                </IconButton>
                <IconButton aria-label="Insert image">
                  <Svg><rect x="4.500" y="5.500" width="13" height="12" stroke="#888" fill="#fff" /><circle cx="12" cy="9" r="2" fill={BLUE} /><path d="M6 16l2.500-4 3 2 4-2v4z" fill={BLUE} /><path d="M13 17h8M17 13v8" stroke="#3aa56a" strokeWidth="1.700" /></Svg>
                </IconButton>
                <CaretButton aria-label="Image options"><Caret /></CaretButton>
                <Divider />
                <IconButton aria-label="Favorite"><FaHeart size={15} color={RED} /></IconButton>
                <CaretButton aria-label="Favorite options"><Caret /></CaretButton>
              </ToolRow>
              <ToolRow $h={35} $pad={4} role="toolbar" aria-label="Pen settings">
                <ToolName><u>P</u>en</ToolName>
                <Divider $short $before={0} $after={15} />
                <IconButton aria-label="Color"><Pencil bar /></IconButton>
                <CaretButton aria-label="Choose color"><Caret /></CaretButton>
                <IconButton aria-label="Line width"><Svg><path d="M4 12h13" stroke="#5b5775" strokeWidth="2.500" /></Svg></IconButton>
                <CaretButton aria-label="Choose width"><Caret /></CaretButton>
                <Divider $short $before={12} $after={13} />
                <IconButton $active aria-label="Smooth"><Svg><path d="M5 19c1-7 3-7 7-8 4-.5 6-2 7-6" stroke={RED} strokeWidth="1.800" /></Svg></IconButton>
                <IconButton aria-label="Pressure">
                  <Svg><path d="M6 7q3-4 6-1.500T18 5" stroke={RED} /><path d="M6 19.500h13" stroke={RED} /><path d="M11 8h3v4h3.500l-5 5.500L8 12h3z" fill={BLUE} /></Svg>
                </IconButton>
                <Divider $short $before={12} $after={14} />
                <IconButton aria-label="Underline"><TextMark kind="under" /></IconButton>
                <IconButton aria-label="Squiggly"><TextMark kind="wave" /></IconButton>
                <IconButton aria-label="Strike out"><TextMark kind="strike" /></IconButton>
                <Divider $short $before={12} $after={15} />
                <IconButton $active aria-label="Touch input"><Hand gap="#b3d5f0" swipe /></IconButton>
              </ToolRow>
            </ToolRows>
            <PenPreview>
              <Svg w={32} h={20}><path d="M5 15c4-9 8-4 12-3.500S25 9 29 3" stroke={INK} strokeWidth="4" strokeLinecap="round" /></Svg>
            </PenPreview>
          </ToolPanel>

          <Viewport>
            <Desk>
              <Page>
                <BodyText>open-circuit&nbsp; equivalent.&nbsp; The output voltage appears as shown in Figure 2.107.</BodyText>
                <CircuitFigure />
              </Page>
              <TouchButton aria-label="Touch mode"><Hand size={24} color="#ad352d" gap="#9d9b9a" /></TouchButton>
            </Desk>
            <ScrollBar>
              <Svg w={9} h={9}><path d="M.5 7l4-4.500 4 4.500" stroke="#555" strokeWidth="1.700" /></Svg>
              <ScrollThumb />
              <Svg w={9} h={9}><path d="M.5 2l4 4.500L8.500 2" stroke="#555" strokeWidth="1.700" /></Svg>
            </ScrollBar>
            <Fringe viewBox="0 0 6 448" fill="none" aria-hidden="true">
              <path d="M0 230l6 9M0 251.500h6M0 388.500h6" stroke="#111" strokeWidth="2" />
              <path d="M0 284l6 1" stroke="#168a62" strokeWidth="2.500" />
              <path d="M0 370h6" stroke="#7d2f86" strokeWidth="2" />
              <path d="M0 372h6" stroke="#7d8a2c" strokeWidth="2" />
            </Fringe>
          </Viewport>
        </Main>
      </Body>

      <StatusBar>
        <StatusSide><StatusText>Modified</StatusText></StatusSide>
        <PageNav>
          <IconButton aria-label="Previous annotation"><NoteArrow color="#e8b566" arrow="#2d5f92" /></IconButton>
          <IconButton aria-label="Next annotation"><NoteArrow color="#c4c4c4" arrow="#999" right /></IconButton>
          <Divider $before={4} />
          <IconButton aria-label="First page"><SquareIcon><path d="M9 8v9" stroke="#fff" strokeWidth="2" /><path d="M16.500 8v9l-6-4.500z" fill="#fff" /></SquareIcon></IconButton>
          <IconButton aria-label="Previous page"><SquareIcon><path d="M15.500 8v9l-7-4.500z" fill="#fff" /></SquareIcon></IconButton>
          <PageInput aria-label="Page" defaultValue="9 of 27" />
          <IconButton aria-label="Next page"><SquareIcon><path d="M9.500 8v9l7-4.500z" fill="#fff" /></SquareIcon></IconButton>
          <IconButton aria-label="Last page"><SquareIcon><path d="M16 8v9" stroke="#fff" strokeWidth="2" /><path d="M8.500 8v9l6-4.500z" fill="#fff" /></SquareIcon></IconButton>
          <Divider />
          <IconButton aria-label="Back"><CircleArrow color="#3a70ad" /></IconButton>
          <IconButton aria-label="Forward"><CircleArrow color="#b0b0b0" right /></IconButton>
        </PageNav>
        <StatusSide $end>
          <IconButton aria-label="Single page"><ViewIcon kind={0} /></IconButton>
          <IconButton $active aria-label="Continuous"><ViewIcon kind={1} /></IconButton>
          <IconButton aria-label="Two pages continuous"><ViewIcon kind={2} /></IconButton>
          <IconButton aria-label="Two pages"><ViewIcon kind={3} /></IconButton>
        </StatusSide>
      </StatusBar>

      <TaskBar>
        <TaskButton $w={42} aria-label="Start"><WindowsLogo /></TaskButton>
        <TaskButton $w={42} aria-label="Search">
          <Svg w={20} h={24}><circle cx="12.500" cy="9" r="6" stroke="#fff" strokeWidth="1.500" /><path d="M8 13.500L1 21.500" stroke="#fff" strokeWidth="1.500" /></Svg>
        </TaskButton>
        <TaskButton $w={42} aria-label="Cortana"><Svg w={20} h={24}><circle cx="10" cy="13" r="7.800" stroke="#fff" strokeWidth="2.500" /></Svg></TaskButton>
        <TaskDivider />
        <TaskButton $w={43} aria-label="Edge"><EdgeLogo /></TaskButton>
        <TaskButton $w={43} $running $multi aria-label="File Explorer"><ExplorerLogo /></TaskButton>
        <TaskButton $w={43} aria-label="Store"><StoreLogo /></TaskButton>
        <TaskButton $w={43} aria-label="Mail"><MailLogo /></TaskButton>
        <TaskButton $w={43} aria-label="Media"><MediaLogo /></TaskButton>
        <TaskButton $w={43} $running $multi aria-label="Zoom"><ZoomLogo /></TaskButton>
        <TaskButton $w={43} $running aria-label="Nitro"><NitroLogo /></TaskButton>
        <TaskButton $w={43} $running aria-label="Word"><WordLogo /></TaskButton>
        <TaskButton $w={43} $running $active aria-label="PDF Annotator"><AppLogo tall /></TaskButton>
        <TaskButton $w={43} $running aria-label="Chrome"><ChromeLogo /></TaskButton>
        <Tray>
          <TrayItem $w={38} aria-label="Help">
            <Svg w={28} h={28}>
              <circle cx="13" cy="14" r="11.500" fill="#2ba5dc" stroke="#fff" strokeWidth="2" />
              <text x="7.500" y="21" fontSize="20" fontWeight="700" fontFamily="Liberation Sans, sans-serif" fill="#fff">?</text>
              <circle cx="22.500" cy="20.500" r="5.500" fill="#e9a92b" />
              <path d="M22.500 19v5M22.500 16.500v1.500" stroke="#fff" strokeWidth="1.500" />
            </Svg>
          </TrayItem>
          <TrayItem $w={38} aria-label="Hidden icons"><Svg w={16} h={10}><path d="M1 9l7-7 7 7" stroke="#fff" strokeWidth="1.400" /></Svg></TrayItem>
          <TrayItem $w={38} aria-label="Battery">
            <Svg w={20} h={16}><path d="M7 3.500h11v9H5.500v-2" stroke="#fff" strokeWidth="1.300" /><path d="M7.500 5H17v6H7.500zM18.500 6h1.500v4h-1.500z" fill="#fff" /><path d="M2 1v2M5 1v2M1 3.500h5v2L4 7H3L1 5.500zM3.500 7v3.500h2" stroke="#fff" /></Svg>
          </TrayItem>
          <TrayItem $w={36} aria-label="Volume">
            <Svg w={20} h={18}><path d="M1 6.500h3l3.500-4v13L4 11.500H1z" stroke="#fff" strokeWidth="1.200" /><path d="M10 7q1.500 2 0 4M13 4.500q3 4.500 0 9M16 2q5 7 0 14" stroke="#fff" strokeWidth="1.200" /></Svg>
          </TrayItem>
          <TrayItem $w={38} aria-label="Network">
            <Svg w={18} h={18}><path d="M2 15Q3 4 15 3M5 15.500Q6 8 15 7M8.500 16Q9 12 15 11" stroke="#d8e6f0" strokeWidth="1.300" /><circle cx="13.500" cy="14.500" r="2" fill="#fff" /></Svg>
          </TrayItem>
          <TrayItem $w={42}>ENG</TrayItem>
          <TrayItem $w={46}>00:56</TrayItem>
          <TrayItem $w={50} aria-label="Notifications">
            <Svg w={20} h={20}><path d="M1 1h18v14h-6l-3 4-3-4H1z" fill="#fff" /><path d="M4.500 5h11M4.500 8h11M4.500 11h7" stroke="#004275" strokeWidth="1.200" /></Svg>
          </TrayItem>
          <TrayEdge />
        </Tray>
      </TaskBar>
    </Shell>
  );
}
